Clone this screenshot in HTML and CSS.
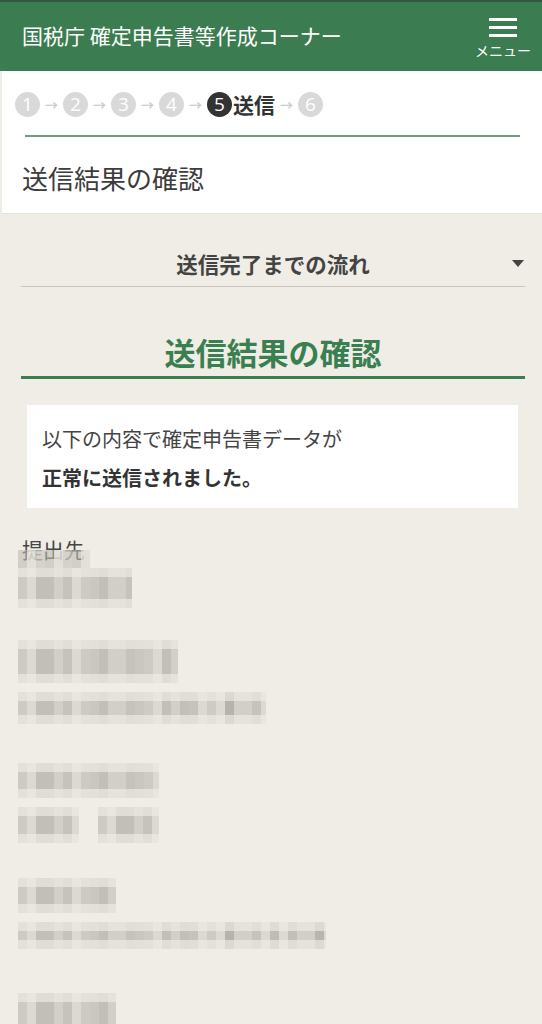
FILE: index.html
```html
<!DOCTYPE html>
<html lang="ja">
<head>
<meta charset="utf-8">
<link rel="stylesheet" href="styles.css">
</head>
<body>
<header class="topbar">
  <div class="site-title">国税庁 確定申告書等作成コーナー</div>
  <div class="menu-btn">
    <span class="bars"><i></i><i></i><i></i></span>
    <span class="menu-label">メニュー</span>
  </div>
</header>

<section class="step-panel">
  <div class="steps">
    <span class="circ">1</span><span class="arr">→</span>
    <span class="circ">2</span><span class="arr">→</span>
    <span class="circ">3</span><span class="arr">→</span>
    <span class="circ">4</span><span class="arr">→</span>
    <span class="circ active">5</span><span class="step-name">送信</span><span class="arr">→</span>
    <span class="circ">6</span>
  </div>
  <div class="step-rule"></div>
  <h1 class="page-title">送信結果の確認</h1>
</section>

<main class="content">
  <div class="accordion">
    <span class="acc-text">送信完了までの流れ</span>
    <span class="acc-caret"></span>
  </div>

  <h2 class="section-title">送信結果の確認</h2>

  <div class="notice">
    <p class="n1">以下の内容で確定申告書データが</p>
    <p class="n2">正常に送信されました。</p>
  </div>

  <div class="fields">
    <div class="field-label">
      <div class="label">提出先</div>
      <div class="mosaic over"></div>
    </div>
    <div class="mosaic m-a2"></div>
    <div class="mosaic m-b"></div>
    <div class="mosaic m-c"></div>
    <div class="mosaic m-d"></div>
    <div class="pair"><div class="mosaic m-e1"></div><div class="mosaic m-e2"></div></div>
    <div class="mosaic m-f"></div>
    <div class="mosaic m-g"></div>
    <div class="mosaic m-h"></div>
  </div>
</main>
</body>
</html>
```

FILE: styles.css
```css
* { box-sizing: border-box; }
html, body { margin: 0; padding: 0; }
body {
  background: #f0ede6;
  font-family: "Noto Sans CJK JP", "Noto Sans", sans-serif;
  color: #333;
  width: 542px;
  height: 1024px;
  overflow: hidden;
}

.topbar {
  height: 71px;
  background: #3b7c50;
  border-top: 2px solid #35573f;
  display: flex;
  align-items: center;
  justify-content: space-between;
  padding: 0 11px 0 22px;
}
.site-title {
  color: #fff;
  font-size: 21px;
  margin-top: -3px;
}
.menu-btn {
  display: flex;
  flex-direction: column;
  align-items: center;
  color: #fff;
  margin-top: 4px;
}
.bars { display: flex; flex-direction: column; gap: 5px; width: 28px; }
.bars i { display: block; height: 3px; background: #fff; }
.menu-label { font-size: 14px; line-height: 18px; margin-top: 4px; }

.step-panel {
  margin-left: 2px;
  background: #fff;
  border-bottom: 1px solid #e4e2dc;
  height: 143px;
  padding-top: 21px;
}
.steps {
  display: flex;
  align-items: center;
  height: 25px;
  padding-left: 13px;
}
.circ {
  width: 25px; height: 25px;
  border-radius: 50%;
  background: #d9d9d9;
  color: #fff;
  font-family: "Open Sans", "Noto Sans", sans-serif;
  font-size: 19px;
  line-height: 25px;
  text-align: center;
}
.circ.active { background: #333; }
.arr {
  width: 23px;
  text-align: center;
  color: #cccccc;
  font-size: 13px;
  font-weight: bold;
  line-height: 25px;
}
.step-name {
  font-size: 21px;
  font-weight: bold;
  color: #333;
  line-height: 25px;
  margin-left: 1px;
}
.step-rule {
  height: 2px;
  background: #6e9f7c;
  margin: 18px 22px 0 23px;
}
.page-title {
  margin: 0;
  padding-left: 20px;
  margin-top: 26px;
  font-size: 26px;
  font-weight: normal;
  color: #3c3c3c;
  line-height: 30px;
}

.content { padding: 0 17px 0 21px; }
.accordion {
  position: relative;
  border-bottom: 1px solid #c9c6c0;
  text-align: center;
  padding: 36px 0 8px;
}
.acc-text { font-size: 21.5px; line-height: 28px; font-weight: bold; color: #444; display: block; }
.acc-caret {
  position: absolute;
  right: 1px;
  top: 46px;
  width: 0; height: 0;
  border-left: 6.5px solid transparent;
  border-right: 6.5px solid transparent;
  border-top: 7px solid #444;
}

.section-title {
  margin: 0;
  margin-top: 45px;
  text-align: center;
  font-size: 31px;
  font-weight: bold;
  color: #3a7f50;
  line-height: 40px;
  padding-bottom: 4px;
  border-bottom: 3px solid #3a7d4f;
}

.notice {
  background: #fff;
  margin: 26px 7px 0 6px;
  padding: 14px 15px 11px;
}
.notice p { margin: 0; font-size: 20px; line-height: 39px; color: #444; }
.notice .n2 { font-weight: bold; color: #333; }

.fields { margin-left: -3px; padding-top: 27px; }
.field-label { position: relative; height: 33px; }
.label { font-size: 21px; color: #444; line-height: 28px; padding-left: 4px; }
.pair { display: flex; gap: 19px; margin-top: 9px; }

.mosaic {
  background-color: #dcd9d2;
  background-image:
    linear-gradient(180deg, rgba(240,237,230,0.65) 0 9px, transparent 9px calc(100% - 9px), rgba(240,237,230,0.65) calc(100% - 9px)),
    repeating-linear-gradient(90deg, rgba(140,137,130,0.18) 0 9px, transparent 9px 18px, rgba(140,137,130,0.32) 18px 27px, rgba(140,137,130,0.12) 27px 45px, rgba(140,137,130,0.28) 45px 54px, transparent 54px 63px),
    repeating-linear-gradient(90deg, transparent 0 27px, rgba(120,117,110,0.18) 27px 36px, transparent 36px 45px);
}
.over {
  position: absolute;
  left: 0;
  top: 15px;
  width: 72px;
  height: 18px;
  background-image: repeating-linear-gradient(90deg, rgba(190,187,180,0.6) 0 9px, rgba(225,222,215,0.85) 9px 18px, rgba(205,202,195,0.75) 18px 27px);
  background-color: transparent;
}
.m-a2 { width: 114px; height: 40px; }
.m-b { width: 160px; height: 43px; margin-top: 32px; }
.m-c { width: 248px; height: 32px; margin-top: 9px; }
.m-d { width: 141px; height: 35px; margin-top: 39px; }
.m-e1 { width: 61px; height: 36px; }
.m-e2 { width: 61px; height: 36px; }
.m-f { width: 98px; height: 35px; margin-top: 35px; }
.m-g { width: 308px; height: 27px; margin-top: 9px; }
.m-h { width: 98px; height: 40px; margin-top: 44px; }
```
